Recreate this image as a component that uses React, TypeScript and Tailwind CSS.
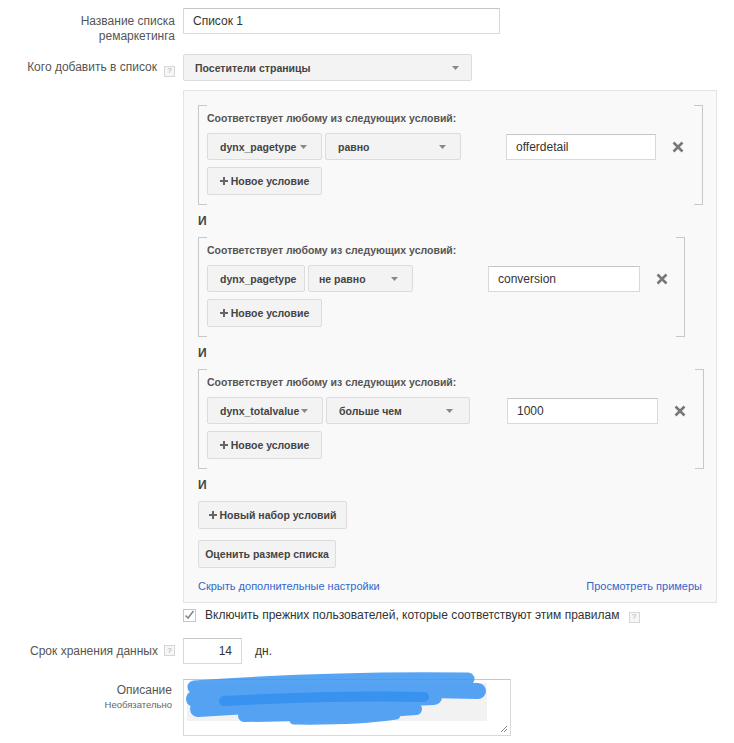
import React from "react";

const Help = () => (
  <span className="inline-flex h-[11px] w-[11px] items-center justify-center border border-[#d6d6d6] bg-[#f6f6f6] text-[8px] leading-none text-[#aaa]">
    ?
  </span>
);

const Arrow = () => (
  <svg width="7" height="4" viewBox="0 0 7 4" className="shrink-0">
    <path d="M0 0 L7 0 L3.5 4 Z" fill="#888" />
  </svg>
);

const Dropdown = ({
  label,
  w,
  arrow = true,
  pl = "pl-[12px]",
  pr = "pr-[14px]",
}: {
  label: string;
  w: string;
  arrow?: boolean;
  pl?: string;
  pr?: string;
}) => (
  <div
    className={`${w} h-[27px] flex items-center justify-between overflow-hidden rounded-[2px] border border-[#dcdcdc] bg-[#f3f3f3] ${pl} ${pr} text-[10.5px] font-bold text-[#444] whitespace-nowrap`}
  >
    <span>{label}</span>
    {arrow && <Arrow />}
  </div>
);

const Input = ({ value, w, right = false }: { value: string; w: string; right?: boolean }) => (
  <div
    className={`${w} h-[26px] flex items-center border border-[#d9d9d9] border-t-[#c6c6c6] bg-white px-[9px] text-[12px] text-[#333] ${right ? "justify-end" : ""}`}
  >
    {value}
  </div>
);

const Plus = () => (
  <svg width="8" height="8" viewBox="0 0 8 8" className="mr-[3px]">
    <path d="M3 0h2v3h3v2H5v3H3V5H0V3h3z" fill="#666" />
  </svg>
);

const Btn = ({ children, w, plus = false }: { children: React.ReactNode; w: string; plus?: boolean }) => (
  <div
    className={`${w} h-[28px] flex items-center justify-center rounded-[2px] border border-[#dcdcdc] bg-[#f3f3f3] text-[10.5px] font-bold text-[#444]`}
  >
    {plus && <Plus />}
    {children}
  </div>
);

const XIcon = () => (
  <svg width="12" height="12" viewBox="0 0 12 12">
    <path d="M1.5 1.5 L10.5 10.5 M10.5 1.5 L1.5 10.5" stroke="#777" strokeWidth="2.5" />
  </svg>
);

const Group = ({
  w,
  dd1,
  dd2,
  gap,
  input,
}: {
  w: string;
  dd1: React.ReactNode;
  dd2: React.ReactNode;
  gap: string;
  input: React.ReactNode;
}) => (
  <div className={`relative ${w} border-l border-r border-[#c8c8c8] pl-[8px] pt-[7px] pb-[10px]`}>
    <span className="absolute left-0 top-0 h-px w-[8px] bg-[#c8c8c8]" />
    <span className="absolute left-0 bottom-0 h-px w-[8px] bg-[#c8c8c8]" />
    <span className="absolute right-0 top-0 h-px w-[8px] bg-[#c8c8c8]" />
    <span className="absolute right-0 bottom-0 h-px w-[8px] bg-[#c8c8c8]" />
    <div className="text-[10.5px] font-bold leading-[13px] text-[#555]">
      Соответствует любому из следующих условий:
    </div>
    <div className="mt-[8px] flex items-center">
      {dd1}
      <div className="ml-[3px]">{dd2}</div>
      <div className={gap}>{input}</div>
      <div className="ml-[16px] flex items-center">
        <XIcon />
      </div>
    </div>
    <div className="mt-[7px]">
      <Btn w="w-[115px]" plus>
        Новое условие
      </Btn>
    </div>
  </div>
);

const And = () => <div className="h-[32px] flex items-center text-[12px] font-bold text-[#444]">И</div>;

export default function App() {
  return (
    <div className="min-h-[743px] w-[734px] bg-white font-['Liberation_Sans',Arial,sans-serif] text-[12px] leading-[14px] text-[#444]">
      <div className="grid grid-cols-[175px_auto] gap-x-[8px] pt-[8px]">
        {/* Row 1 */}
        <div className="pt-[6px] text-right leading-[15px] text-[#555]">
          Название списка
          <br />
          ремаркетинга
        </div>
        <div>
          <Input value="Список 1" w="w-[317px]" />
        </div>

        {/* Row 2 */}
        <div className="mt-[10px] flex items-start justify-end gap-[7px] pt-[7px] text-[#555]">
          <span className="leading-[13px]">Кого добавить в список</span>
          <span className="mt-[1px]">
            <Help />
          </span>
        </div>
        <div className="mt-[10px]">
          <Dropdown label="Посетители страницы" w="w-[289px]" pl="pl-[11px]" pr="pr-[12px]" />
        </div>

        {/* Panel */}
        <div />
        <div className="mt-[9px] w-[534px] border border-[#e3e3e3] bg-[#f9f9f9] pl-[14px] pt-[14px] pb-[9px]">
          <Group
            w="w-[505px]"
            dd1={<Dropdown label="dynx_pagetype" w="w-[115px]" />}
            dd2={<Dropdown label="равно" w="w-[136px]" />}
            gap="ml-[45px]"
            input={<Input value="offerdetail" w="w-[150px]" />}
          />
          <And />
          <Group
            w="w-[487px]"
            dd1={<Dropdown label="dynx_pagetype" w="w-[98px]" arrow={false} />}
            dd2={<Dropdown label="не равно" w="w-[105px]" pl="pl-[10px]" />}
            gap="ml-[75px]"
            input={<Input value="conversion" w="w-[152px]" />}
          />
          <And />
          <Group
            w="w-[506px]"
            dd1={<Dropdown label="dynx_totalvalue" w="w-[116px]" />}
            dd2={<Dropdown label="больше чем" w="w-[144px]" pr="pr-[16px]" />}
            gap="ml-[37px]"
            input={<Input value="1000" w="w-[151px]" />}
          />
          <And />
          <Btn w="w-[149px]" plus>
            Новый набор условий
          </Btn>
          <div className="mt-[11px]">
            <Btn w="w-[138px]">Оценить размер списка</Btn>
          </div>
          <div className="mt-[11px] flex justify-between pr-[14px] text-[11px] text-[#3366cc]">
            <span>Скрыть дополнительные настройки</span>
            <span>Просмотреть примеры</span>
          </div>
        </div>

        {/* Checkbox */}
        <div />
        <div className="mt-[5px] flex items-center">
          <span className="flex h-[13px] w-[13px] items-center justify-center border border-[#c6c6c6] bg-white">
            <svg width="11" height="10" viewBox="0 0 11 10">
              <path d="M1.5 5.5 L4 8 L9.5 1" stroke="#888" strokeWidth="1.6" fill="none" />
            </svg>
          </span>
          <span className="ml-[9px] text-[12px] text-[#333]">
            Включить прежних пользователей, которые соответствуют этим правилам
          </span>
          <span className="ml-[9px]">
            <Help />
          </span>
        </div>

        {/* Retention */}
        <div className="mt-[15px] flex items-center justify-end gap-[6px] text-[#555]">
          <span>Срок хранения данных</span>
          <Help />
        </div>
        <div className="mt-[15px] flex items-center">
          <Input value="14" w="w-[59px]" right />
          <span className="ml-[13px] text-[#333]">дн.</span>
        </div>

        {/* Description */}
        <div className="mt-[15px] pt-[4px] text-right text-[#555]">
          <div className="leading-[15px] pr-[3px]">Описание</div>
          <div className="text-[9.5px] leading-[14px] text-[#666] pr-[3px]">Необязательно</div>
        </div>
        <div className="mt-[15px]">
          <div className="relative h-[57px] w-[328px] border border-[#d9d9d9] border-t-[#c6c6c6] bg-white">
            <div className="absolute left-[3px] top-[3px] h-[38px] w-[300px] bg-[#f2f2f2]" />
            <svg
              className="absolute left-0 top-[-9px]"
              width="310"
              height="60"
              viewBox="0 0 310 60"
            >
              <g fill="none" strokeLinecap="round" stroke="#3a95f2" opacity="0.85">
                <path d="M10 16 Q 150 6 284 8" strokeWidth="13" />
                <path d="M10 28 Q 150 16 294 20" strokeWidth="16" />
                <path d="M14 38 Q 140 30 250 26" strokeWidth="16" />
                <path d="M60 45 Q 160 44 232 38" strokeWidth="12" />
                <path d="M110 49 Q 170 50 212 44" strokeWidth="9" />
              </g>
              <g fill="none" strokeLinecap="round" stroke="#1b84ee" opacity="0.5">
                <path d="M40 30 Q 150 24 240 26" strokeWidth="10" />
              </g>
            </svg>
            <svg className="absolute bottom-[2px] right-[2px]" width="8" height="8" viewBox="0 0 8 8">
              <path d="M7 1 L1 7 M7 4 L4 7" stroke="#888" strokeWidth="1" />
            </svg>
          </div>
        </div>
      </div>
    </div>
  );
}
